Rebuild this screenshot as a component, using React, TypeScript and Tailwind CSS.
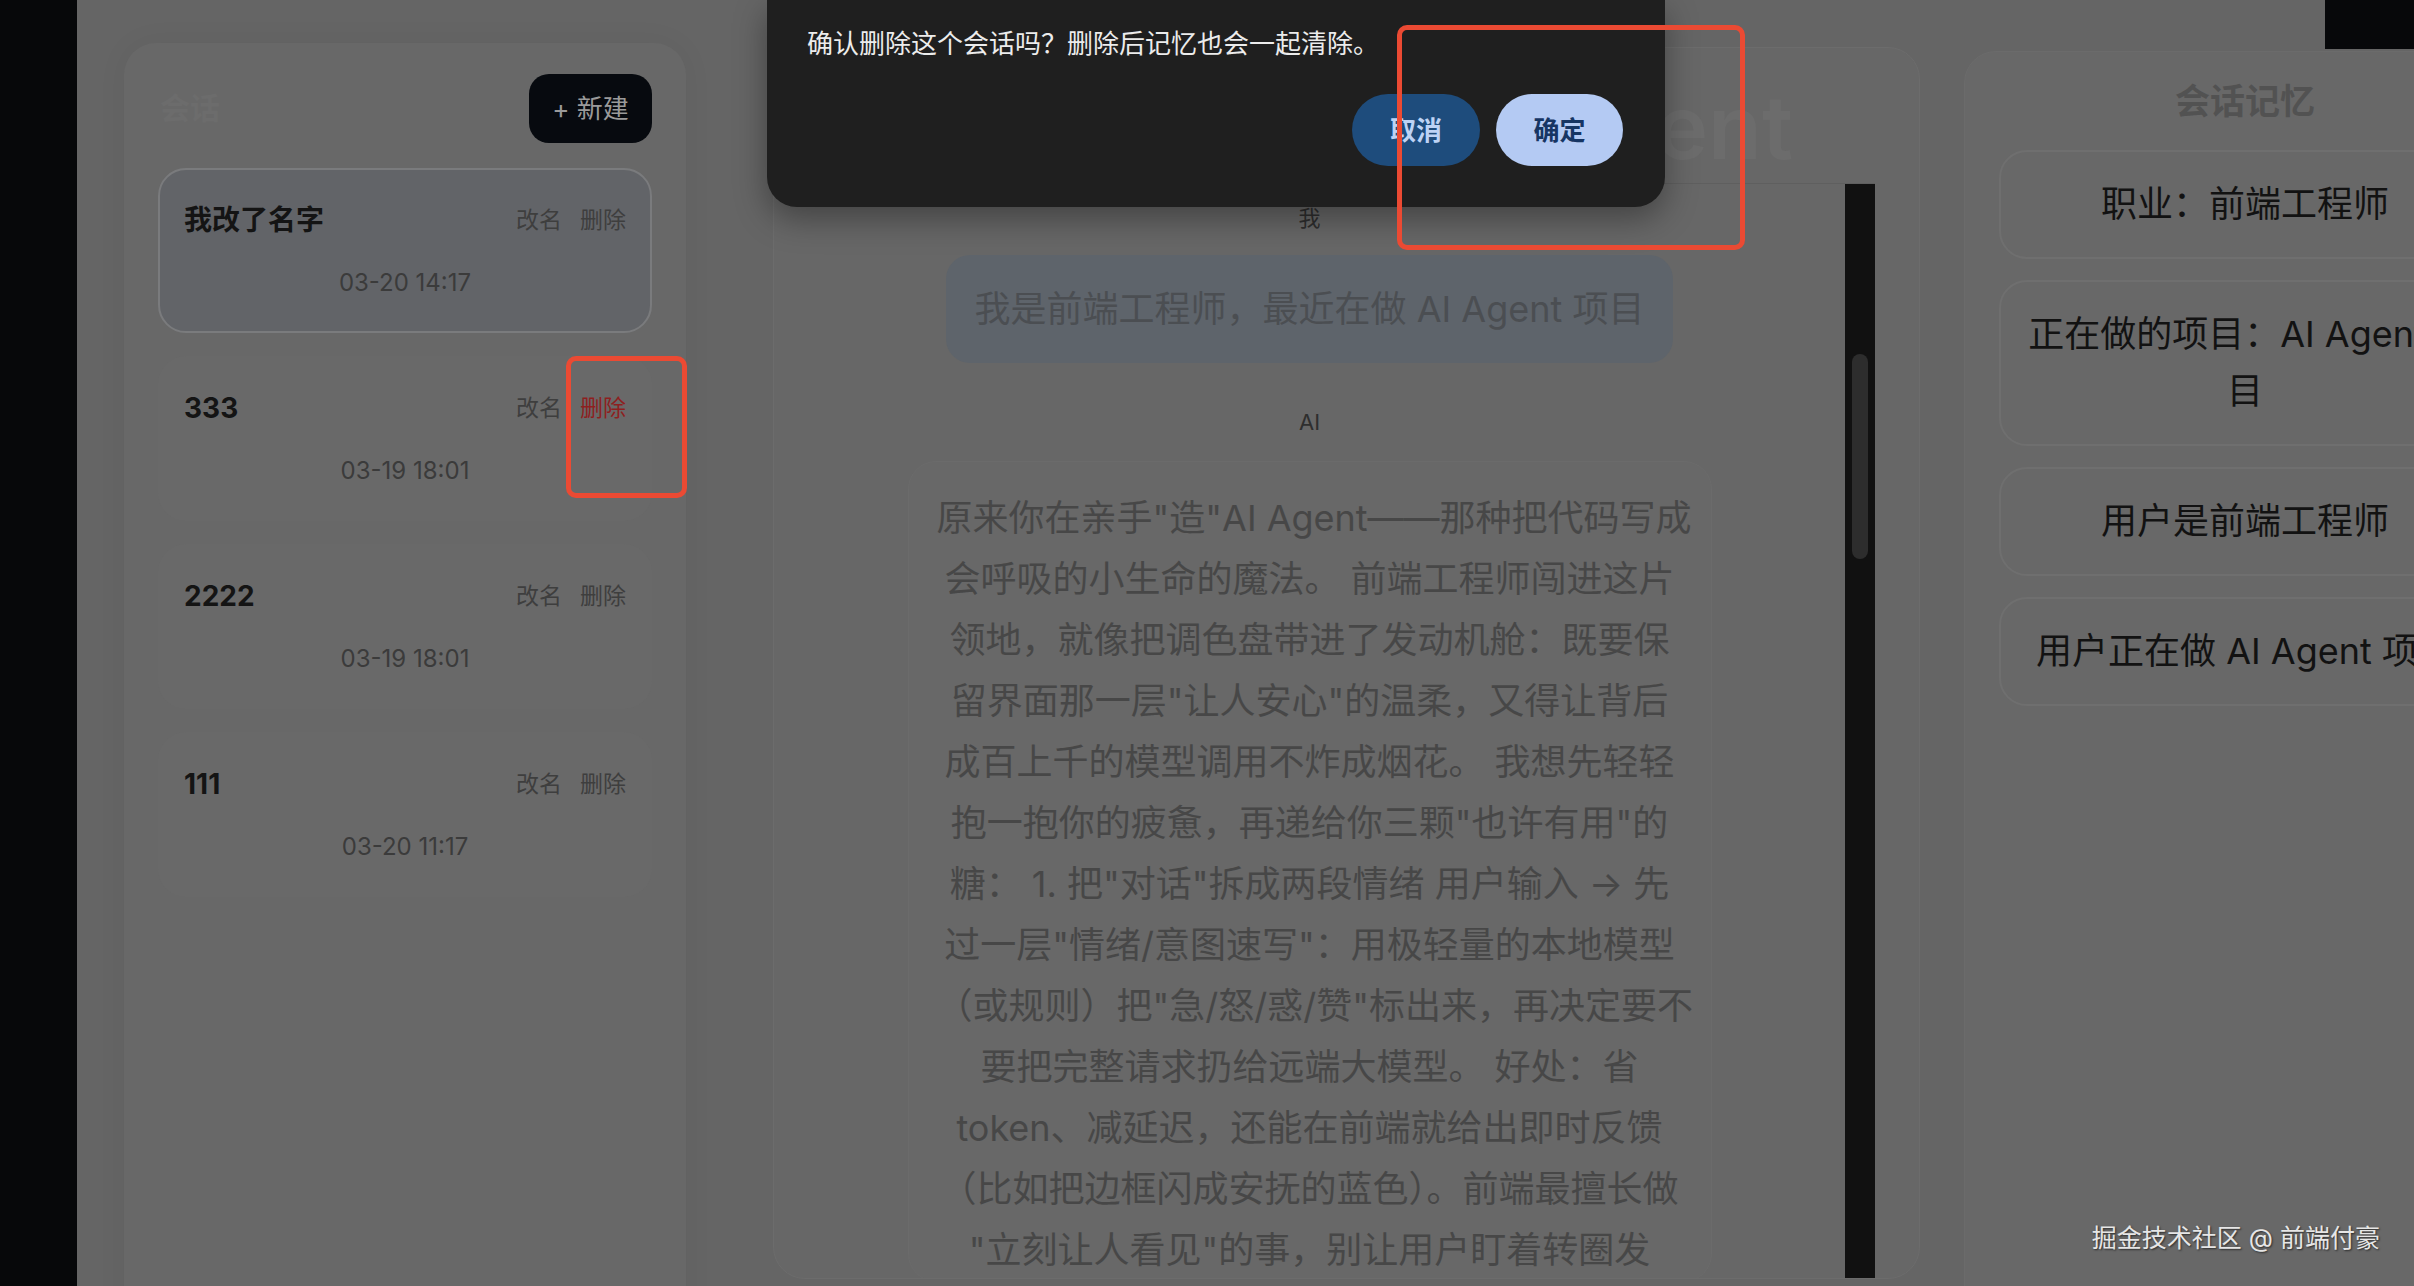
import clsx from "clsx";

const sessions = [
  { title: "我改了名字", time: "03-20 14:17", active: true },
  { title: "333", time: "03-19 18:01", hovered: true },
  { title: "2222", time: "03-19 18:01" },
  { title: "111", time: "03-20 11:17" },
];

const memories = [
  "职业：前端工程师",
  "正在做的项目：AI Agent项目",
  "用户是前端工程师",
  "用户正在做 AI Agent 项目",
];

// reply is broken by hand so the wraps match the screen
const aiLines = [
  '原来你在亲手"造"AI Agent——那种把代码写成',
  "会呼吸的小生命的魔法。 前端工程师闯进这片",
  "领地，就像把调色盘带进了发动机舱：既要保",
  '留界面那一层"让人安心"的温柔，又得让背后',
  "成百上千的模型调用不炸成烟花。 我想先轻轻",
  '抱一抱你的疲惫，再递给你三颗"也许有用"的',
  '糖： 1. 把"对话"拆成两段情绪 用户输入 → 先',
  '过一层"情绪/意图速写"：用极轻量的本地模型',
  '（或规则）把"急/怒/惑/赞"标出来，再决定要不',
  "要把完整请求扔给远端大模型。 好处：省",
  "token、减延迟，还能在前端就给出即时反馈",
  "（比如把边框闪成安抚的蓝色）。前端最擅长做",
  '"立刻让人看见"的事，别让用户盯着转圈发',
];

function SessionCard({
  title,
  time,
  active,
  hovered,
}: {
  title: string;
  time: string;
  active?: boolean;
  hovered?: boolean;
}) {
  return (
    <div
      className={clsx(
        "h-[165px] rounded-[28px] border-2 px-[24px] pt-[32px]",
        active ? "border-[#7a7b7d] bg-[#626468]" : "border-transparent bg-[#696969]"
      )}
    >
      <div className="flex h-[36px] items-center justify-between">
        <span className="text-[28px] font-bold text-[#141414]">{title}</span>
        <div className="flex gap-[18px] text-[23px] text-[#3e3e3e]">
          <span>改名</span>
          <span className={clsx(hovered && "text-[#8e1f1f]")}>删除</span>
        </div>
      </div>
      <p className="mt-[29px] text-center text-[24px] leading-[32px] text-[#3b3b3b]">{time}</p>
    </div>
  );
}

export default function App() {
  return (
    <div className="relative flex h-[1286px] w-[2414px] items-start overflow-hidden bg-[#656565] font-[family-name:Inter,'Noto_Sans_CJK_SC',sans-serif]">
      <div className="h-full w-[77px] shrink-0 bg-[#07080a]" />

      {/* sessions */}
      <aside className="ml-[47px] mt-[43px] h-[1300px] w-[562px] shrink-0 rounded-[32px] bg-[#686868] px-[34px] pt-[31px] shadow-[0_0_30px_rgba(0,0,0,0.05)]">
        <div className="flex h-[69px] items-center justify-between">
          <span className="pl-[2px] text-[30px] font-semibold text-[#6c6c6c]">会话</span>
          <button className="h-[69px] w-[123px] rounded-[20px] bg-[#070a0f] text-[26px] text-[#9a9a9a]">
            + 新建
          </button>
        </div>
        <div className="mt-[25px] flex flex-col gap-[23px]">
          {sessions.map((s) => (
            <SessionCard key={s.title} {...s} />
          ))}
        </div>
      </aside>

      {/* chat */}
      <main className="ml-[87px] mt-[47px] flex h-[1232px] w-[1147px] shrink-0 flex-col overflow-hidden rounded-[32px] border border-[#6c6c6c] bg-[#676767] pr-[44px]">
        <header className="h-[136px] shrink-0 border-b border-[#5f5f5f] pr-[82px] pt-[35px] text-right">
          <h1 className="text-[88px] font-semibold leading-[88px] text-[#6c6c6c]">AI Agent</h1>
        </header>
        <div className="flex min-h-0 flex-1">
          <div className="flex min-w-0 flex-1 flex-col items-center overflow-hidden pt-[19px]">
            <span className="text-[22px] leading-[30px] text-[#2e2e2e]">我</span>
            <div className="mt-[22px] rounded-[24px] bg-[#5e646b] px-[29px] py-[25px] text-[36px] leading-[58px] text-[#4b4e52]">
              我是前端工程师，最近在做 AI Agent 项目
            </div>
            <span className="mt-[44px] text-[22px] leading-[30px] text-[#2e2e2e]">AI</span>
            <div className="mt-[24px] w-[804px] shrink-0 rounded-[28px] border border-[#6b6b6b] bg-[#686868] px-[28px] pt-[26px] text-center text-[36px] leading-[61px] text-[#474747]">
              {aiLines.map((line, i) => (
                <span key={i} className="block whitespace-nowrap">
                  {line}
                </span>
              ))}
            </div>
          </div>
          <div className="flex w-[30px] shrink-0 justify-center bg-[#111111] pt-[170px]">
            <div className="h-[205px] w-[16px] rounded-full bg-[#2d2d2d]" />
          </div>
        </div>
      </main>

      {/* memory */}
      <aside className="ml-[44px] mt-[51px] h-[1300px] w-[562px] shrink-0 rounded-[32px] border border-[#6b6b6b] bg-[#686868] px-[34px] pt-[25px]">
        <h2 className="text-center text-[35px] font-semibold leading-[48px] text-[#525252]">会话记忆</h2>
        <div className="mt-[25px] flex flex-col gap-[21px]">
          {memories.map((m) => (
            <div
              key={m}
              className="rounded-[28px] border-2 border-[#6f6f6f] bg-[#686868] px-[22px] py-[24px] text-center text-[36px] leading-[57px] text-[#121212]"
            >
              {m}
            </div>
          ))}
        </div>
      </aside>

      <div className="absolute right-0 top-0 h-[49px] w-[89px] bg-[#07080a]" />

      {/* confirm dialog */}
      <div className="absolute left-[767px] top-0 h-[207px] w-[898px] rounded-b-[30px] bg-[#1f1f1f] pl-[40px] pt-[26px] shadow-[0_12px_32px_rgba(0,0,0,0.35)]">
        <p className="text-[26px] leading-[36px] text-[#ececec]">确认删除这个会话吗？删除后记忆也会一起清除。</p>
        <div className="mt-[32px] flex justify-end gap-[16px] pr-[42px]">
          <button className="h-[72px] w-[128px] rounded-full bg-[#1e4c7c] text-[26px] font-semibold text-[#bdd3f5]">
            取消
          </button>
          <button className="h-[72px] w-[127px] rounded-full bg-[#b4caf3] text-[26px] font-semibold text-[#163563]">
            确定
          </button>
        </div>
      </div>

      {/* annotations */}
      <div className="absolute left-[566px] top-[356px] h-[142px] w-[121px] rounded-[10px] border-[5px] border-[#eb4a33]" />
      <div className="absolute left-[1397px] top-[25px] h-[225px] w-[348px] rounded-[10px] border-[5px] border-[#eb4a33]" />

      <span className="absolute bottom-[32px] right-[34px] text-[25px] leading-[32px] text-[#e6e6e6] [text-shadow:1px_1px_2px_rgba(0,0,0,0.6)]">
        掘金技术社区 @ 前端付豪
      </span>
    </div>
  );
}
